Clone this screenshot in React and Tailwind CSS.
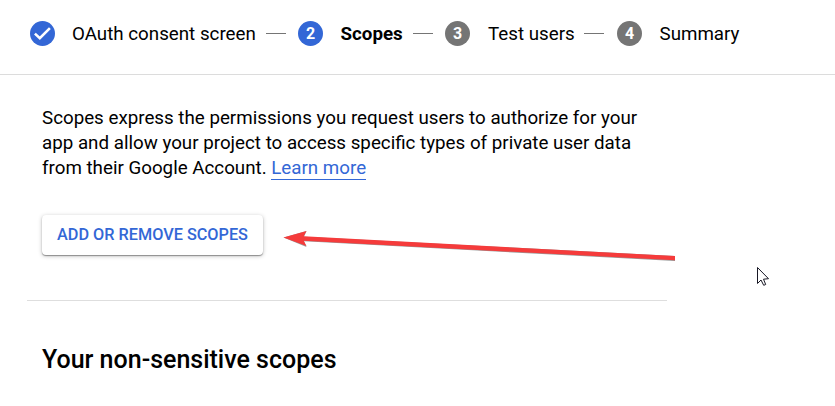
import React from "react";

function Badge({ n, active }) {
  return (
    <span
      className={
        "flex h-[25px] w-[25px] shrink-0 items-center justify-center rounded-full text-base font-bold text-white " +
        (active ? "bg-[#3367d6]" : "bg-[#757575]")
      }
    >
      {n}
    </span>
  );
}

function Dash() {
  return <span className="h-px w-5 shrink-0 bg-[#757575]" />;
}

export default function App() {
  return (
    <main className="relative h-[406px] w-[835px] overflow-hidden bg-white font-[Roboto,sans-serif] text-black">
      <nav className="flex h-[75px] items-start border-b-[1px] border-[#dcdcdc] pt-[21px] pl-[30px] text-[18.75px] leading-[25px] whitespace-nowrap">
        <div className="flex h-[25px] w-[236px] items-start">
          <span className="flex h-[25px] w-[25px] shrink-0 items-center justify-center rounded-full bg-[#3367d6]">
            <svg className="h-[25px] w-[25px]" viewBox="0 0 25 25" fill="none" stroke="white" strokeWidth="2.6">
              <path d="M4.9 12.6 9.8 17.2 19.9 7.2" />
            </svg>
          </span>
          <span className="ml-[17px] pt-px">OAuth consent screen</span>
        </div>
        <div className="flex h-[25px] w-[32px] items-center">
          <Dash />
        </div>
        <div className="flex h-[25px] w-[115px] items-start">
          <Badge n="2" active />
          <span className="ml-[17.5px] pt-px font-bold">Scopes</span>
        </div>
        <div className="flex h-[25px] w-[32px] items-center">
          <Dash />
        </div>
        <div className="flex h-[25px] w-[139px] items-start">
          <Badge n="3" />
          <span className="ml-[18px] pt-px">Test users</span>
        </div>
        <div className="flex h-[25px] w-[33px] items-center">
          <Dash />
        </div>
        <div className="flex h-[25px] items-start">
          <Badge n="4" />
          <span className="ml-[17.5px] pt-px">Summary</span>
        </div>
      </nav>

      <section className="ml-[27px] h-[226px] w-[640px] border-b border-[#dedede] pt-[31px] pl-[15px]">
        <p className="text-[18.75px] leading-[25px] whitespace-nowrap">
          Scopes express the permissions you request users to authorize for your
          <br />
          app and allow your project to access specific types of private user data
          <br />
          from their Google Account.{" "}
          <a className="inline-block h-[24px] border-b border-[#3367d6] text-[#3367d6]">Learn more</a>
        </p>
        <button className="mt-[34px] flex h-10 w-[221px] items-center justify-center rounded-[4px] bg-white text-[16.25px] font-medium whitespace-nowrap text-[#3367d6] shadow-[0_1px_1px_rgba(0,0,0,0.35),0_1px_4px_rgba(0,0,0,0.25)]">
          ADD OR REMOVE SCOPES
        </button>
      </section>

      <h2 className="mt-[43px] ml-[42px] text-[25px] leading-[32px] font-medium whitespace-nowrap">
        Your non-sensitive scopes
      </h2>

      <svg
        className="absolute top-[224px] left-[280px] h-[42px] w-[400px]"
        viewBox="280 224 400 42"
      >
        <path
          d="M283.5 237.5 306.5 231 304 236.7 675 256 675 261 304 241.3 306.5 247 Z"
          fill="#555"
          opacity="0.6"
        />
        <path
          d="M283.5 237.5 306.5 231 303.7 236.3 675 256 675 260.3 303.7 240.8 306.5 246 Z"
          fill="#f53b3b"
        />
      </svg>

      <svg className="absolute top-[266px] left-[756px] h-[22px] w-[15px]" viewBox="0 0 15 22">
        <path
          d="M1.5 1.5V17.5L5 14 7.7 19.3 9.7 18.5 7.5 13.2 12.5 12.7Z"
          fill="white"
          stroke="#181825"
          strokeWidth="1"
        />
      </svg>
    </main>
  );
}
